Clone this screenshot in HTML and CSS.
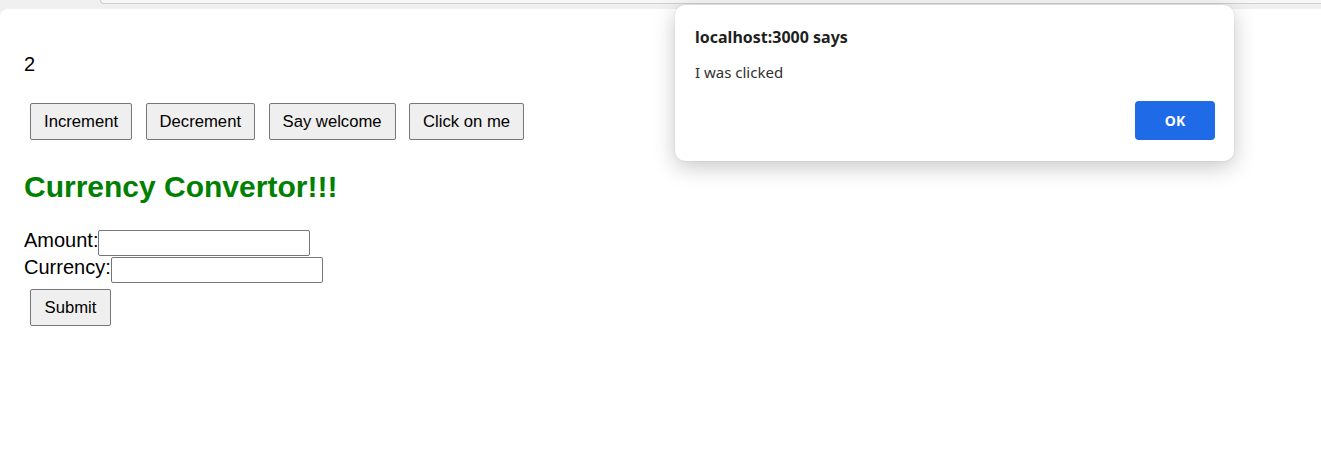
FILE: index.html
```html
<!DOCTYPE html>
<html lang="en">
<head>
<meta charset="utf-8">
<title>App</title>
<link rel="stylesheet" href="styles.css">
</head>
<body>
  <div class="chrome">
    <div class="omnibox"></div>
  </div>
  <main class="page">
    <div class="counter">2</div>
    <div class="btn-row">
      <button class="btn">Increment</button>
      <button class="btn">Decrement</button>
      <button class="btn">Say welcome</button>
      <button class="btn">Click on me</button>
    </div>
    <h2 class="title">Currency Convertor!!!</h2>
    <form class="form">
      <div class="field"><label>Amount:</label><input type="text" class="input"></div>
      <div class="field"><label>Currency:</label><input type="text" class="input"></div>
      <button type="button" class="btn submit">Submit</button>
    </form>
  </main>
  <div class="dialog">
    <div class="dialog-title">localhost:3000 says</div>
    <div class="dialog-msg">I was clicked</div>
    <div class="dialog-actions"><button class="ok">OK</button></div>
  </div>
</body>
</html>
```
FILE: styles.css
```css
* { box-sizing: border-box; }
html, body {
  margin: 0;
  padding: 0;
  height: 100%;
  background: #f0f0f0;
  overflow: hidden;
}
body {
  font-family: "Liberation Sans", Arial, sans-serif;
  color: #000;
  display: flex;
  flex-direction: column;
}
.chrome {
  height: 9px;
  flex: none;
  display: flex;
  padding-left: 100px;
}
.omnibox {
  flex: 1;
  height: 4px;
  border-left: 1px solid #cfcfcf;
  border-bottom: 1px solid #cfcfcf;
  border-bottom-left-radius: 7px;
  background: #f7f7f7;
}
.page {
  flex: 1;
  background: #fff;
  border-top-left-radius: 8px;
  padding: 44px 24px 0;
  font-size: 20px;
}
.counter {
  line-height: 23px;
  height: 23px;
}
.btn-row {
  display: flex;
  gap: 13.5px;
  margin-top: 27px;
  padding-left: 6px;
}
.btn {
  font-family: "Liberation Sans", Arial, sans-serif;
  font-size: 16.67px;
  height: 37px;
  padding: 0 13px;
  background: #efefef;
  border: 1px solid #767676;
  border-radius: 2px;
  color: #000;
}
.title {
  margin: 29px 0 0;
  font-size: 30px;
  line-height: 35px;
  font-weight: bold;
  color: #008000;
}
.form {
  margin-top: 24px;
}
.field {
  display: flex;
  align-items: flex-start;
  height: 27px;
  line-height: 23px;
}
.field label {
  padding-top: 1px;
}
.input {
  margin-top: 2px;
  width: 212px;
  height: 26px;
  border: 1px solid #767676;
  border-radius: 2px;
  padding: 0 2px;
  font-size: 16px;
  background: #fff;
}
.submit {
  display: block;
  margin: 7px 0 0 6px;
  width: 81px;
  padding: 0;
}
.dialog {
  position: absolute;
  left: 675px;
  top: 5px;
  width: 559px;
  height: 156px;
  background: #fff;
  border-radius: 10px;
  box-shadow: 0 6px 22px rgba(0, 0, 0, 0.22), 0 0 2px rgba(0, 0, 0, 0.12);
  padding: 21px 19px 20px 20px;
  font-family: "Noto Sans", "Open Sans", sans-serif;
  color: #1f1f1f;
}
.dialog-title {
  font-size: 16px;
  font-weight: bold;
  line-height: 22px;
}
.dialog-msg {
  margin-top: 14px;
  font-size: 15px;
  line-height: 20px;
  color: #303030;
}
.dialog-actions {
  display: flex;
  justify-content: flex-end;
  margin-top: 19px;
}
.ok {
  width: 80px;
  height: 39px;
  border: none;
  border-radius: 4px;
  background: #1f6ae6;
  color: #fff;
  font-family: "Noto Sans", "Open Sans", sans-serif;
  font-size: 14px;
  font-weight: bold;
}
```
